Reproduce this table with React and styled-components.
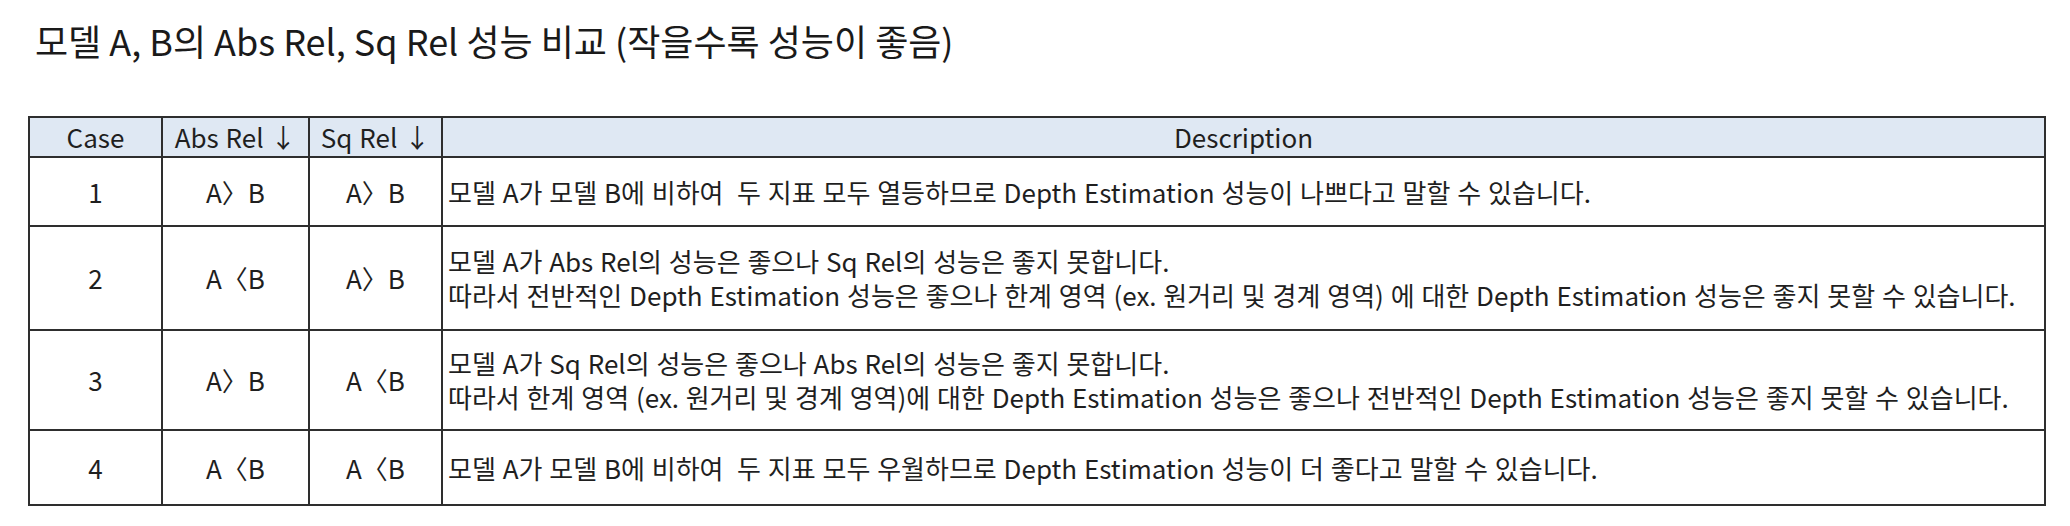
import React from "react";
import styled, { createGlobalStyle } from "styled-components";

const GlobalStyle = createGlobalStyle`
	body {
		margin: 0;
		background: #ffffff;
		font-family: "Noto Sans CJK KR", "Noto Sans", sans-serif;
		color: #1f1f1f;
	}
`;

const Page = styled.div`
	padding: 18px 0 0 28px;
`;

const Title = styled.h2`
	margin: 0 0 54px 7px;
	font-size: 36px;
	line-height: 44px;
	font-weight: 400;
	color: #1a1a1a;
	white-space: nowrap;
`;

const Table = styled.div`
	width: 2018px;
	box-sizing: border-box;
	border-top: 2px solid #2e2e2e;
	border-left: 2px solid #2e2e2e;
	display: flex;
	flex-direction: column;
`;

const Row = styled.div`
	display: grid;
	grid-template-columns: 133px 147px 133px 1fr;
	height: ${(props) => props.$h}px;
`;

const Cell = styled.div`
	display: flex;
	flex-direction: column;
	justify-content: center;
	align-items: ${(props) => (props.$left ? "flex-start" : "center")};
	padding-left: ${(props) => (props.$left ? "5px" : "0")};
	box-sizing: border-box;
	border-right: 2px solid #2e2e2e;
	border-bottom: 2px solid #2e2e2e;
	background: ${(props) => (props.$head ? "#dfe8f3" : "#ffffff")};
	font-size: 26px;
	line-height: 34px;
	word-spacing: 1px;
	white-space: nowrap;
`;

const headers = ["Case", "Abs Rel ↓", "Sq Rel ↓", "Description"];

const rows = [
	{
		h: 69,
		cells: ["1", "A〉B", "A〉B"],
		desc: [
			"모델 A가 모델 B에 비하여\u00a0 두 지표 모두 열등하므로 Depth Estimation 성능이 나쁘다고 말할 수 있습니다.",
		],
	},
	{
		h: 104,
		cells: ["2", "A〈B", "A〉B"],
		desc: [
			"모델 A가 Abs Rel의 성능은 좋으나 Sq Rel의 성능은 좋지 못합니다.",
			"따라서 전반적인 Depth Estimation 성능은 좋으나 한계 영역 (ex. 원거리 및 경계 영역) 에 대한 Depth Estimation 성능은 좋지 못할 수 있습니다.",
		],
	},
	{
		h: 100,
		cells: ["3", "A〉B", "A〈B"],
		desc: [
			"모델 A가 Sq Rel의 성능은 좋으나 Abs Rel의 성능은 좋지 못합니다.",
			"따라서 한계 영역 (ex. 원거리 및 경계 영역)에 대한 Depth Estimation 성능은 좋으나 전반적인 Depth Estimation 성능은 좋지 못할 수 있습니다.",
		],
	},
	{
		h: 75,
		cells: ["4", "A〈B", "A〈B"],
		desc: [
			"모델 A가 모델 B에 비하여\u00a0 두 지표 모두 우월하므로 Depth Estimation 성능이 더 좋다고 말할 수 있습니다.",
		],
	},
];

export default function App() {
	return (
		<>
			<GlobalStyle />
			<Page>
				<Title>모델 A, B의 Abs Rel, Sq Rel 성능 비교 (작을수록 성능이 좋음)</Title>
				<Table>
					<Row $h={40}>
						{headers.map((h) => (
							<Cell key={h} $head>
								{h}
							</Cell>
						))}
					</Row>
					{rows.map((r) => (
						<Row key={r.cells[0]} $h={r.h}>
							{r.cells.map((c, i) => (
								<Cell key={i}>{c}</Cell>
							))}
							<Cell $left>
								{r.desc.map((line) => (
									<span key={line}>{line}</span>
								))}
							</Cell>
						</Row>
					))}
				</Table>
			</Page>
		</>
	);
}
